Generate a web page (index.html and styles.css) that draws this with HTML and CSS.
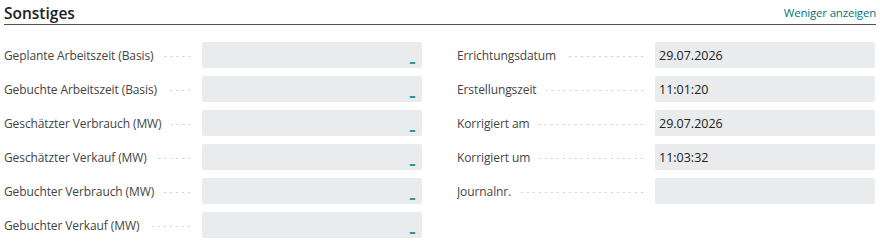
FILE: index.html
```html
<!DOCTYPE html>
<html lang="de">
<head>
    <meta charset="UTF-8">
    <title>Sonstiges</title>
    <link rel="stylesheet" href="styles.css">
</head>
<body>
    <div class="section">
        <div class="section-header">
            <h2>Sonstiges</h2>
            <a href="#" class="toggle-link">Weniger anzeigen</a>
        </div>

        <div class="fields">
            <div class="field-column">
                <div class="field">
                    <div class="field-label"><span>Geplante Arbeitszeit (Basis)</span></div>
                    <div class="field-value numeric"><span class="blank">_</span></div>
                </div>
                <div class="field">
                    <div class="field-label"><span>Gebuchte Arbeitszeit (Basis)</span></div>
                    <div class="field-value numeric"><span class="blank">_</span></div>
                </div>
                <div class="field">
                    <div class="field-label"><span>Geschätzter Verbrauch (MW)</span></div>
                    <div class="field-value numeric"><span class="blank">_</span></div>
                </div>
                <div class="field">
                    <div class="field-label"><span>Geschätzter Verkauf (MW)</span></div>
                    <div class="field-value numeric"><span class="blank">_</span></div>
                </div>
                <div class="field">
                    <div class="field-label"><span>Gebuchter Verbrauch (MW)</span></div>
                    <div class="field-value numeric"><span class="blank">_</span></div>
                </div>
                <div class="field">
                    <div class="field-label"><span>Gebuchter Verkauf (MW)</span></div>
                    <div class="field-value numeric"><span class="blank">_</span></div>
                </div>
            </div>

            <div class="field-column">
                <div class="field">
                    <div class="field-label"><span>Errichtungsdatum</span></div>
                    <div class="field-value">29.07.2026</div>
                </div>
                <div class="field">
                    <div class="field-label"><span>Erstellungszeit</span></div>
                    <div class="field-value">11:01:20</div>
                </div>
                <div class="field">
                    <div class="field-label"><span>Korrigiert am</span></div>
                    <div class="field-value">29.07.2026</div>
                </div>
                <div class="field">
                    <div class="field-label"><span>Korrigiert um</span></div>
                    <div class="field-value">11:03:32</div>
                </div>
                <div class="field">
                    <div class="field-label"><span>Journalnr.</span></div>
                    <div class="field-value"></div>
                </div>
            </div>
        </div>
    </div>
</body>
</html>
```

FILE: styles.css
```css
body {
    margin: 0;
    font-family: 'Open Sans', 'Noto Sans', sans-serif;
    font-size: 12px;
    color: #212121;
    background-color: white;
}

.section {
    padding: 0 4px;
}

.section-header {
    display: flex;
    justify-content: space-between;
    align-items: flex-end;
    height: 24px;
    border-bottom: 1px solid #505050;
}

.section-header h2 {
    margin: 0 0 1px 0;
    font-size: 15.5px;
    font-weight: 600;
    line-height: 20px;
}

.toggle-link {
    margin-bottom: 4px;
    font-size: 11.5px;
    letter-spacing: -0.2px;
    color: #00797b;
    text-decoration: none;
}

.fields {
    display: grid;
    grid-template-columns: 418px 418px;
    column-gap: 35px;
    margin-top: 17px;
}

.field-column {
    display: flex;
    flex-direction: column;
    gap: 8px;
}

.field {
    display: grid;
    grid-template-columns: 188px 220px;
    column-gap: 10px;
    height: 26px;
}

.field-label {
    display: flex;
    align-items: center;
    gap: 9px;
    color: #444;
    letter-spacing: -0.1px;
    white-space: nowrap;
    overflow: hidden;
}

.field-label::after {
    content: "";
    flex: 1;
    height: 3px;
    min-width: 20px;
    background-image: radial-gradient(circle, #cfcfcf 0.7px, transparent 1px);
    background-size: 6px 3px;
    background-position: right center;
    background-repeat: repeat-x;
    margin-top: 2px;
}

.field-value {
    background-color: #eaebec;
    border-radius: 2px;
    padding: 0 4px;
    display: flex;
    align-items: center;
    font-size: 12.5px;
    color: #212121;
}

.field-value.numeric {
    justify-content: flex-end;
    padding-right: 7px;
}

.blank {
    color: #008b8b;
    font-weight: 600;
    padding-top: 3px;
    text-shadow: 0 0.6px 0 #008b8b;
}
```
